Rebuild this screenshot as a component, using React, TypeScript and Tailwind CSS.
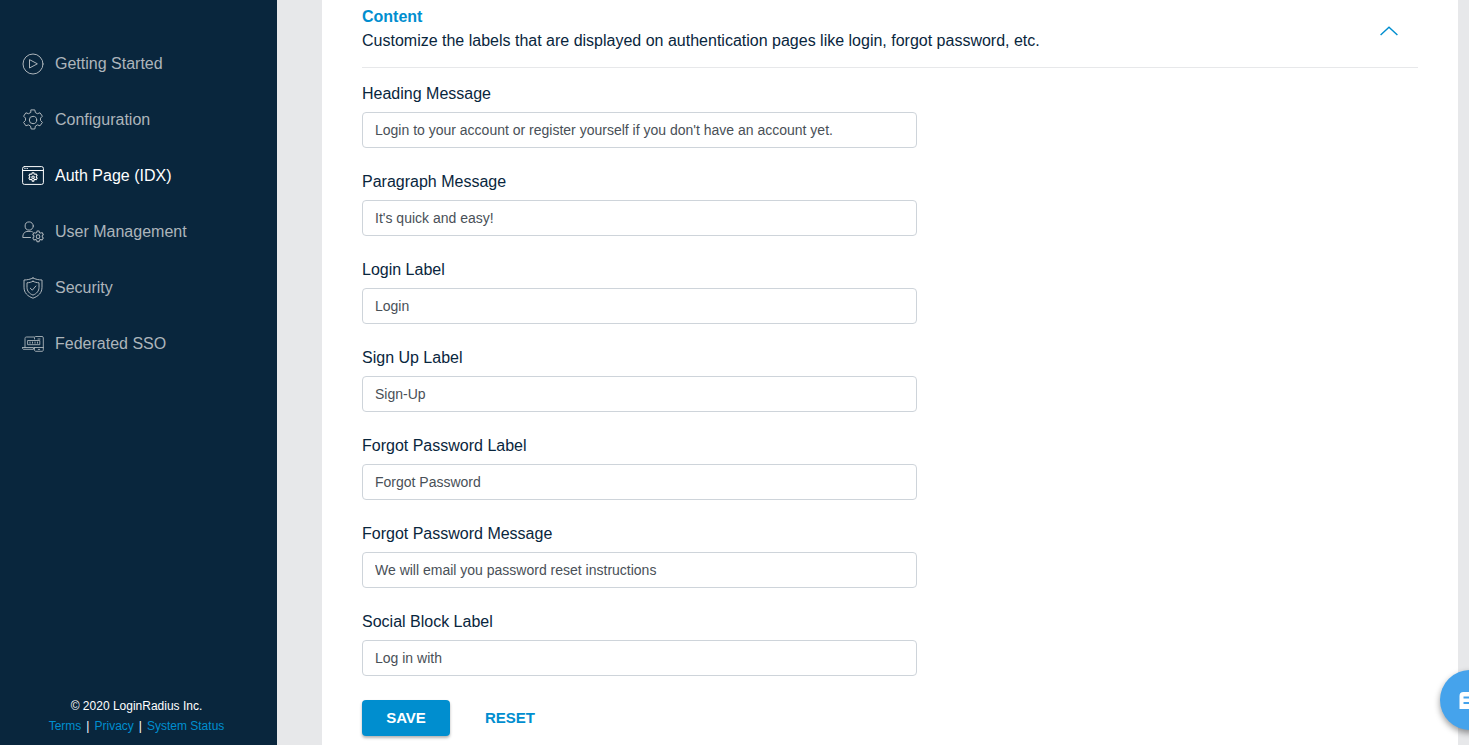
import { useState } from 'react';

const navItems = [
  { label: 'Getting Started', icon: PlayIcon },
  { label: 'Configuration', icon: GearIcon },
  { label: 'Auth Page (IDX)', icon: AuthPageIcon, active: true },
  { label: 'User Management', icon: UserGearIcon },
  { label: 'Security', icon: ShieldIcon },
  { label: 'Federated SSO', icon: SsoIcon },
];

const fields = [
  { id: 'heading', label: 'Heading Message', value: "Login to your account or register yourself if you don't have an account yet." },
  { id: 'paragraph', label: 'Paragraph Message', value: "It's quick and easy!" },
  { id: 'login', label: 'Login Label', value: 'Login' },
  { id: 'signup', label: 'Sign Up Label', value: 'Sign-Up' },
  { id: 'forgot', label: 'Forgot Password Label', value: 'Forgot Password' },
  { id: 'forgot-message', label: 'Forgot Password Message', value: 'We will email you password reset instructions' },
  { id: 'social', label: 'Social Block Label', value: 'Log in with' },
];

const iconProps = {
  width: 22,
  height: 22,
  viewBox: '0 0 22 22',
  fill: 'none',
  stroke: 'currentColor',
  strokeLinecap: 'round' as const,
  strokeLinejoin: 'round' as const,
  'aria-hidden': true,
};

const gearPath =
  'M9.2 .9h3.6l.6 2.7 2 1.1 2.6-.9 2.4 3.4-1.9 1.9v2.3l1.9 2-2.4 3.4-2.6-.9-2 1.2-.6 2.9H9.2l-.7-2.9-2-1.2-2.6.9-2.3-3.4 1.9-2V9.1L1.6 7.2l2.3-3.4 2.6.9 2-1.1z';

function PlayIcon() {
  return (
    <svg {...iconProps}>
      <circle cx="11" cy="11" r="10" />
      <path d="M7.5 7v8l7.5-4z" />
    </svg>
  );
}

function GearIcon() {
  return (
    <svg {...iconProps}>
      <path d={gearPath} />
      <circle cx="11" cy="11" r="3.7" />
    </svg>
  );
}

function AuthPageIcon() {
  return (
    <svg {...iconProps}>
      <rect x=".6" y="1.6" width="20.8" height="17.8" rx="1.8" />
      <path d="M1 5.500h20" />
      <path d="M2.800 3.500h.4M5 3.500h.4" />
      <g transform="translate(6.200 7.300) scale(.44)" strokeWidth="2.400">
        <path d={gearPath} />
        <circle cx="11" cy="11" r="2.800" />
      </g>
    </svg>
  );
}

function UserGearIcon() {
  return (
    <svg {...iconProps}>
      <circle cx="7.200" cy="5" r="4.100" />
      <path d="M8.500 16.500H.8c0-4.200 2-6.100 5.300-6.100h2.200c.8 0 1.500.1 2.100.4" />
      <g transform="translate(9.900 9.500) scale(.56)" strokeWidth="1.800">
        <path d={gearPath} />
        <circle cx="11" cy="11" r="3.200" />
      </g>
    </svg>
  );
}

function ShieldIcon() {
  return (
    <svg {...iconProps}>
      <path d="M11 1C8.500 2.300 5 3 2 3v7.200c0 5.600 3.500 9 9 11 5.500-2 9-5.400 9-11V3c-3 0-6.500-.7-9-2z" />
      <path d="M11 4.300C9.300 5.200 7 5.700 5 5.800v4.600c0 3.700 2.300 6.200 6 7.700 3.700-1.500 6-4 6-7.700V5.800c-2-.1-4.300-.6-6-1.500z" />
      <path d="M8.300 11.200l2 2 3.600-4.200" />
    </svg>
  );
}

function SsoIcon() {
  return (
    <svg {...iconProps} strokeWidth=".9">
      <path d="M3 14.500V5.500c0-1 .5-1.500 1.500-1.500H12M.5 14.500h11v1.800h-10c-.6 0-1-.5-1-1.300z" />
      <path d="M12.500 6V4.800c0-1 .5-1.300 1.300-1.300H20c.9 0 1.300.5 1.300 1.300v12c0 1-.4 1.500-1.300 1.500h-6.200c-.9 0-1.300-.5-1.300-1.500v-2.300M12.500 14.500h8.800M16 6h2M16.300 16.400h1.400" />
      <rect x="6" y="7.500" width="11.800" height="4.200" />
      <path d="M8 9v1.200M10.500 9v1.200M13 9v1.200M15.500 9v1.200" />
    </svg>
  );
}

function Sidebar() {
  return (
    <aside className="flex w-[277px] shrink-0 flex-col justify-between bg-[#09263d] pt-9 pb-[9px]">
      <nav>
        {navItems.map(({ label, icon: Icon, active }) => (
          <a
            key={label}
            href="#"
            aria-current={active ? 'page' : undefined}
            className={`flex h-14 items-center gap-[11px] pl-[22px] text-base ${active ? 'text-white' : 'text-[#adb5bb]'}`}
          >
            <Icon />
            {label}
          </a>
        ))}
      </nav>
      <footer className="pr-1 text-center text-xs leading-5 text-white">
        <p>© 2020 LoginRadius Inc.</p>
        <p className="flex justify-center gap-[5px]">
          <a href="#" className="text-[#008ecf]">Terms</a>
          <span>|</span>
          <a href="#" className="text-[#008ecf]">Privacy</a>
          <span>|</span>
          <a href="#" className="text-[#008ecf]">System Status</a>
        </p>
      </footer>
    </aside>
  );
}

export default function App() {
  const [open, setOpen] = useState(true);

  return (
    <div className="flex min-h-screen bg-[#e7e8ea] font-['Liberation_Sans',Arial,sans-serif] text-[#09263d]">
      <Sidebar />

      <main className="ml-[45px] mr-[11px] min-w-0 flex-1 bg-white px-10 pt-[5px] pb-2">
        <header className="flex items-center justify-between border-b border-[#e7e8ea] pb-[14px]">
          <div>
            <h2 className="text-base leading-6 font-bold text-[#008ecf]">Content</h2>
            <p className="text-base leading-6">
              Customize the labels that are displayed on authentication pages like login, forgot password, etc.
            </p>
          </div>
          <button type="button" aria-label="Toggle content section" onClick={() => setOpen(!open)} className="mr-5 pt-1 text-[#008ecf]">
            <svg width="18" height="10" viewBox="0 0 18 10" fill="none" stroke="currentColor" strokeWidth="1.4">
              <path d="M.6 9L9 1.200 17.400 9" />
            </svg>
          </button>
        </header>

        {open && (
          <form className="pt-3" onSubmit={(e) => e.preventDefault()}>
            <div className="flex max-w-[555px] flex-col gap-5">
              {fields.map((field) => (
                <div key={field.id} className="flex flex-col gap-1">
                  <label htmlFor={field.id} className="text-base leading-7">
                    {field.label}
                  </label>
                  <input
                    id={field.id}
                    type="text"
                    defaultValue={field.value}
                    className="h-9 w-full rounded border border-[#ced4da] bg-white px-3 text-sm text-[#495057]"
                  />
                </div>
              ))}
            </div>
            <div className="mt-6 flex items-center gap-[35px]">
              <button type="submit" className="h-9 w-[88px] rounded bg-[#008ecf] text-[15px] font-bold text-white shadow-[0_2px_3px_rgba(0,0,0,0.3)]">
                SAVE
              </button>
              <button type="reset" className="h-9 text-[15px] font-bold text-[#008ecf]">
                RESET
              </button>
            </div>
          </form>
        )}
      </main>

      {/* Chat launcher, sits partly past the window edge */}
      <div className="pointer-events-none fixed right-0 bottom-0 h-[90px] w-[50px] overflow-hidden">
        <button
          type="button"
          aria-label="Open chat"
          className="pointer-events-auto absolute top-[15px] left-[21px] flex size-[60px] items-center justify-center rounded-full bg-[#45a3ec] text-white shadow-[0_3px_6px_rgba(0,0,0,0.4)]"
        >
          <svg width="22" height="20" viewBox="0 0 22 20" aria-hidden="true">
            <path d="M4.500 2h13a4 4 0 0 1 4 4v13H.5V6a4 4 0 0 1 4-4z" fill="currentColor" />
            <path d="M4.500 7.500h13M4.500 13h13" stroke="#45a3ec" strokeWidth="2" />
          </svg>
        </button>
      </div>
    </div>
  );
}
